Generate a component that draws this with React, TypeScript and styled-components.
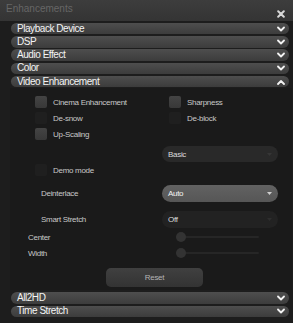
import styled, { createGlobalStyle } from "styled-components";

const GlobalStyle = createGlobalStyle`
  body {
    margin: 0;
    background: #ffffff;
    font-family: "Liberation Sans", Arial, sans-serif;
  }
`;

const Chevron = ({ up }: { up?: boolean }) => (
  <svg width="8" height="6" viewBox="0 0 8 6">
    <polyline
      points={up ? "1,5 4,2 7,5" : "1,1.5 4,4.5 7,1.5"}
      fill="none"
      stroke="#f2f2f2"
      strokeWidth="1.8"
      strokeLinecap="round"
      strokeLinejoin="round"
    />
  </svg>
);

const CloseIcon = () => (
  <svg width="8" height="8" viewBox="0 0 8 8">
    <path d="M1.2 1.2 L6.8 6.8 M6.8 1.2 L1.2 6.8" stroke="#d8d8d8" strokeWidth="2" strokeLinecap="round" />
  </svg>
);

const SmallArrow = ({ color }: { color: string }) => (
  <svg width="5" height="3" viewBox="0 0 5 3">
    <polygon points="0,0 5,0 2.5,3" fill={color} />
  </svg>
);

const top = ["Playback Device", "DSP", "Audio Effect", "Color"];
const bottom = ["All2HD", "Time Stretch"];

const App = () => {
  return (
    <Window>
      <GlobalStyle />
      <TitleBar>
        <span>Enhancements</span>
        <CloseBtn>
          <CloseIcon />
        </CloseBtn>
      </TitleBar>
      <Sections>
        {top.map((t) => (
          <SectionRow key={t}>
            <span>{t}</span>
            <Chevron />
          </SectionRow>
        ))}
        <SectionRow>
          <span>Video Enhancement</span>
          <Chevron up />
        </SectionRow>
      </Sections>

      <Content>
        <CheckRow $top={8}>
          <Check label="Cinema Enhancement" />
          <Check label="Sharpness" />
        </CheckRow>
        <CheckRow $top={4}>
          <Check label="De-snow" off />
          <Check label="De-block" off />
        </CheckRow>
        <CheckRow $top={4}>
          <Check label="Up-Scaling" />
        </CheckRow>
        <FieldRow $top={6}>
          <FieldLabel />
          <Select $variant="dark">
            <span>Basic</span>
            <SmallArrow color="#363636" />
          </Select>
        </FieldRow>
        <CheckRow $top={2}>
          <Check label="Demo mode" off />
        </CheckRow>
        <FieldRow $top={9}>
          <FieldLabel>Deinterlace</FieldLabel>
          <Select $variant="active">
            <span>Auto</span>
            <SmallArrow color="#cfcfcf" />
          </Select>
        </FieldRow>
        <FieldRow $top={9}>
          <FieldLabel>Smart Stretch</FieldLabel>
          <Select $variant="off">
            <span>Off</span>
            <SmallArrow color="#2e2e2e" />
          </Select>
        </FieldRow>
        <SliderRow $top={3}>
          <SliderLabel>Center</SliderLabel>
          <Track>
            <Knob />
          </Track>
        </SliderRow>
        <SliderRow $top={4}>
          <SliderLabel>Width</SliderLabel>
          <Track>
            <Knob />
          </Track>
        </SliderRow>
        <ResetWrap>
          <ResetButton>Reset</ResetButton>
        </ResetWrap>
      </Content>

      <Sections>
        {bottom.map((t) => (
          <SectionRow key={t}>
            <span>{t}</span>
            <Chevron />
          </SectionRow>
        ))}
      </Sections>
    </Window>
  );
};

const Check = ({ label, off }: { label: string; off?: boolean }) => (
  <CheckItem>
    <Box $off={off} />
    <CheckLabel>{label}</CheckLabel>
  </CheckItem>
);

const Window = styled.div`
  width: 293px;
  height: 323px;
  background: #1d1d1d;
  display: flex;
  flex-direction: column;
  overflow: hidden;
`;

const TitleBar = styled.div`
  height: 21px;
  flex: none;
  background: linear-gradient(#3d3d3d, #343434);
  display: flex;
  align-items: center;
  justify-content: space-between;
  padding: 0 8px 0 6px;
  color: #666666;
  font-size: 10px;
  span {
    margin-top: -4px;
  }
`;

const CloseBtn = styled.div`
  display: flex;
  margin-top: 6px;
`;

const Sections = styled.div`
  display: flex;
  flex-direction: column;
  gap: 1.8px;
  padding: 1.8px 4px 0 11px;
`;

const SectionRow = styled.div`
  height: 11.5px;
  border-radius: 6px;
  background: linear-gradient(#4e4e4e, #3c3c3c);
  display: flex;
  align-items: center;
  justify-content: space-between;
  padding: 0 4px 0 6px;
  color: #f4f4f4;
  font-size: 10px;
  letter-spacing: -0.45px;
  span {
    line-height: 1;
  }
`;

const Content = styled.div`
  margin: 1px 1px 0 10px;
  height: 202px;
  flex: none;
  background: #1a1a1a;
  display: flex;
  flex-direction: column;
`;

const CheckRow = styled.div<{ $top: number }>`
  margin-top: ${(p) => p.$top}px;
  height: 12px;
  display: grid;
  grid-template-columns: 134px 1fr;
  padding-left: 25px;
`;

const CheckItem = styled.div`
  display: flex;
  align-items: center;
  gap: 6px;
`;

const Box = styled.div<{ $off?: boolean }>`
  width: 12px;
  height: 12px;
  border-radius: 2px;
  background: ${(p) => (p.$off ? "#1f1f1f" : "linear-gradient(#444, #383838)")};
`;

const Label = styled.span`
  color: #c8c8c8;
  font-size: 8px;
  letter-spacing: -0.3px;
`;

const CheckLabel = styled(Label)``;

const FieldRow = styled.div<{ $top: number }>`
  margin-top: ${(p) => p.$top}px;
  display: grid;
  grid-template-columns: 152px 116px;
  align-items: center;
`;

const FieldLabel = styled(Label)`
  padding-left: 31px;
`;

const selectBg = {
  dark: "#292929",
  active: "linear-gradient(#626262, #565656)",
  off: "#222222",
};

const Select = styled.div<{ $variant: "dark" | "active" | "off" }>`
  height: ${(p) => (p.$variant === "dark" ? 16 : 17)}px;
  border-radius: 9px;
  background: ${(p) => selectBg[p.$variant]};
  display: flex;
  align-items: center;
  justify-content: space-between;
  padding: 0 6px 0 6px;
  color: ${(p) => (p.$variant === "active" ? "#f4f4f4" : "#dcdcdc")};
  font-size: 8px;
  letter-spacing: -0.3px;
`;

const SliderRow = styled.div<{ $top: number }>`
  margin-top: ${(p) => p.$top}px;
  height: 12px;
  display: grid;
  grid-template-columns: 166px 83px;
  align-items: center;
`;

const SliderLabel = styled(Label)`
  padding-left: 18px;
`;

const Track = styled.div`
  height: 2px;
  background: #262626;
  border-radius: 1px;
  display: flex;
  align-items: center;
`;

const Knob = styled.div`
  width: 10px;
  height: 10px;
  border-radius: 50%;
  background: #333333;
  flex: none;
`;

const ResetWrap = styled.div`
  margin-top: 9px;
  padding-left: 96px;
`;

const ResetButton = styled.div`
  width: 97px;
  height: 19px;
  border-radius: 5px;
  background: linear-gradient(#404040, #333333);
  display: flex;
  align-items: center;
  justify-content: center;
  color: #b4b4b4;
  font-size: 8px;
  letter-spacing: -0.3px;
`;

export default App;
